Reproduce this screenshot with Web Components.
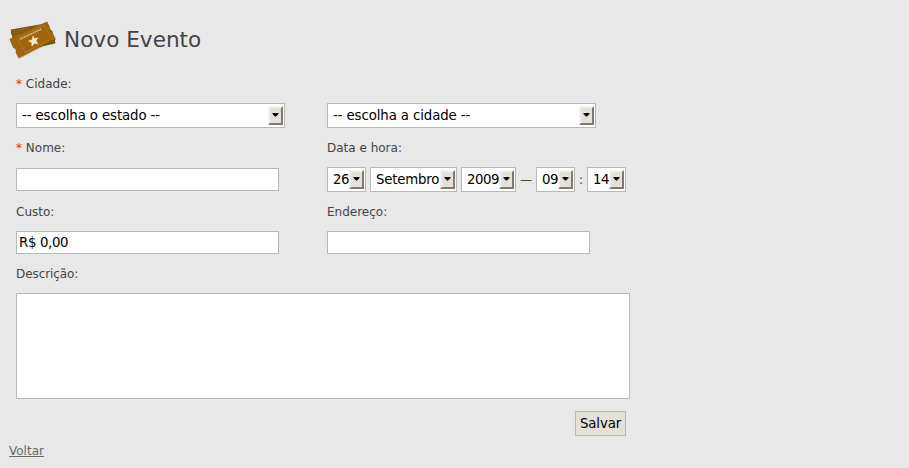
<!DOCTYPE html>
<html lang="pt-BR">
<head>
<meta charset="utf-8">
<title>Novo Evento</title>
<style>
html, body { margin: 0; background: #e8e8e8; }
body { font-family: "DejaVu Sans", sans-serif; font-size: 12px; color: #444; }
</style>
</head>
<body>
<event-page></event-page>
<script>
class TicketIcon extends HTMLElement {
  constructor() {
    super();
    this.attachShadow({ mode: 'open' }).innerHTML = `
<style>:host{display:block;width:50px;height:42px}svg{display:block}</style>
<svg width="50" height="42" viewBox="0 0 50 42">
  <g transform="translate(0 1.2)">
  <path d="M2.8 10.2 L36 4.5 L44.5 12 L44.8 17 L46.4 18 L47.4 24.4 L30 28 L9 29 L5.5 25 L3.5 19 Q5.4 17 3 14.5Z" fill="#85540c"/>
  <path d="M4.5 11.6 L22 8.8 M5.5 13.6 L16 11.8 M6 16.2 L12 15" stroke="#a0712b" stroke-width=".6" fill="none"/>
  <path d="M2.2 20.5 L39.3 3 L42.2 8.6 Q41.2 12.4 44.5 13.4 L48 20.6 L10.8 39.6 L8 34 Q9.2 30.2 5.6 29 L2.2 22Z" fill="#6b4004" opacity=".5"/>
  <path d="M1.6 19.8 L39 2.2 L41.8 8 Q40.7 11.8 44 12.8 L47.3 19.8 L10.6 38.8 L7.6 33 Q8.8 29 5.1 28.2Z" fill="#a0650f"/>
  <path d="M9 18.6 L18.4 35.2 M36 6 L44.2 20.8 M11 18.2 L35.8 6.3 M16.5 33.5 L42.5 20.3" stroke="#b98239" stroke-width=".6" fill="none"/>
  <path d="M12 20 L33.4 9.8" stroke="#d6b57c" stroke-width="1.6" stroke-dasharray="1.6 .4" fill="none"/>
  <path d="M24.8 16.1 L26.6 19.1 L30.4 18.3 L28.3 21.6 L30.4 25 L26.5 24.3 L23.8 27.5 L23.3 23.4 L19.9 21.8 L24 20.3Z" fill="#f7e6c6"/>
  </g>
</svg>`;
  }
}
customElements.define('ticket-icon', TicketIcon);

class FormField extends HTMLElement {
  constructor() {
    super();
    this.attachShadow({ mode: 'open' }).innerHTML = `
<style>
:host{display:block}
.label{height:16px;line-height:16px;margin-bottom:11px;white-space:nowrap}
.req{color:#f20;display:none}
:host([required]) .req{display:inline}
.control{display:flex;align-items:center;min-height:var(--control-h,25px)}
</style>
<div class="label"><span class="req">* </span><span class="t"></span></div>
<div class="control"><slot></slot></div>`;
    this.shadowRoot.querySelector('.t').textContent = this.getAttribute('label');
  }
}
customElements.define('form-field', FormField);

class SelectBox extends HTMLElement {
  constructor() {
    super();
    this.attachShadow({ mode: 'open' }).innerHTML = `
<style>
:host{display:flex;box-sizing:border-box;height:25px;border:1px solid #b9b9b9;background:#fff;color:#000;padding:2px 1px 2px 5px;font-size:13.33px;line-height:19px}
.v{flex:1;white-space:nowrap;width:0}
.b{flex:none;box-sizing:border-box;width:15px;height:19px;background:#e5e0da;border:solid;border-width:2px;border-color:#f3f1ee #7f7973 #7f7973 #f3f1ee;display:flex;align-items:center;justify-content:center}
svg{display:block;margin-top:-2px}
</style>
<span class="v"><slot></slot></span>
<span class="b"><svg width="7" height="4" viewBox="0 0 7 4"><path d="M.5 0H6.5V1L4 3.5H3L.5 1Z" fill="#000"/></svg></span>`;
  }
}
customElements.define('select-box', SelectBox);

class TextBox extends HTMLElement {
  constructor() {
    super();
    this.attachShadow({ mode: 'open' }).innerHTML = `
<style>:host{display:block;box-sizing:border-box;width:263px;height:23px;border:1px solid #b9b9b9;background:#fff;color:#000;padding:0 2px;font-size:13.33px;letter-spacing:-.35px;line-height:21px}
:host([multiline]){width:614px;height:106px}</style><slot></slot>`;
  }
}
customElements.define('text-box', TextBox);

class PushButton extends HTMLElement {
  constructor() {
    super();
    this.attachShadow({ mode: 'open' }).innerHTML = `
<style>:host{display:block}
button{display:block;box-sizing:border-box;width:51px;height:25px;border:1px solid #b9b9b9;background:#e5e0da;color:#000;padding:0;font:13.33px/23px "DejaVu Sans",sans-serif;letter-spacing:-.15px}</style><button><slot></slot></button>`;
  }
}
customElements.define('push-button', PushButton);

class EventPage extends HTMLElement {
  constructor() {
    super();
    this.attachShadow({ mode: 'open' }).innerHTML = `
<style>
:host{display:block;box-sizing:border-box;height:468px;padding:18px 0 0 8px}
header{display:flex;height:42px;align-items:center;gap:6px}
h1{margin:0;padding-top:2px;font-size:21.6px;font-weight:400;line-height:28px}
form{margin:16px 0 0 8px;width:614px}
.grid{display:grid;grid-template-columns:311px 303px;grid-template-rows:64px 64px 62px}
.short{--control-h:23px}
.wide{width:269px;letter-spacing:-.11px}
.month{letter-spacing:-.2px}
.num{letter-spacing:-.45px}
.dash{width:20px;text-align:center}.colon{width:12px;text-align:center}
.gap{margin-left:4px}
.actions{display:flex;justify-content:flex-end;padding:12px 4px 0 0}
a{display:inline-block;color:#666;margin:7px 0 0 1px;line-height:16px}
</style>
<header><ticket-icon></ticket-icon><h1>Novo Evento</h1></header>
<form>
  <div class="grid">
    <form-field label="Cidade:" required><select-box class="wide">-- escolha o estado --</select-box></form-field>
    <form-field label=""><select-box class="wide">-- escolha a cidade --</select-box></form-field>
    <form-field label="Nome:" required><text-box></text-box></form-field>
    <form-field label="Data e hora:">
      <select-box class="num" style="width:39px">26</select-box>
      <select-box class="gap month" style="width:87px">Setembro</select-box>
      <select-box class="gap num" style="width:55px">2009</select-box>
      <span class="dash">—</span>
      <select-box class="num" style="width:39px">09</select-box>
      <span class="colon">:</span>
      <select-box class="num" style="width:39px">14</select-box>
    </form-field>
    <form-field class="short" label="Custo:"><text-box>R$ 0,00</text-box></form-field>
    <form-field class="short" label="Endereço:"><text-box></text-box></form-field>
  </div>
  <form-field label="Descrição:" style="letter-spacing:-.08px"><text-box multiline></text-box></form-field>
  <div class="actions"><push-button>Salvar</push-button></div>
</form>
<a href="#">Voltar</a>`;
  }
}
customElements.define('event-page', EventPage);
</script>
</body>
</html>
